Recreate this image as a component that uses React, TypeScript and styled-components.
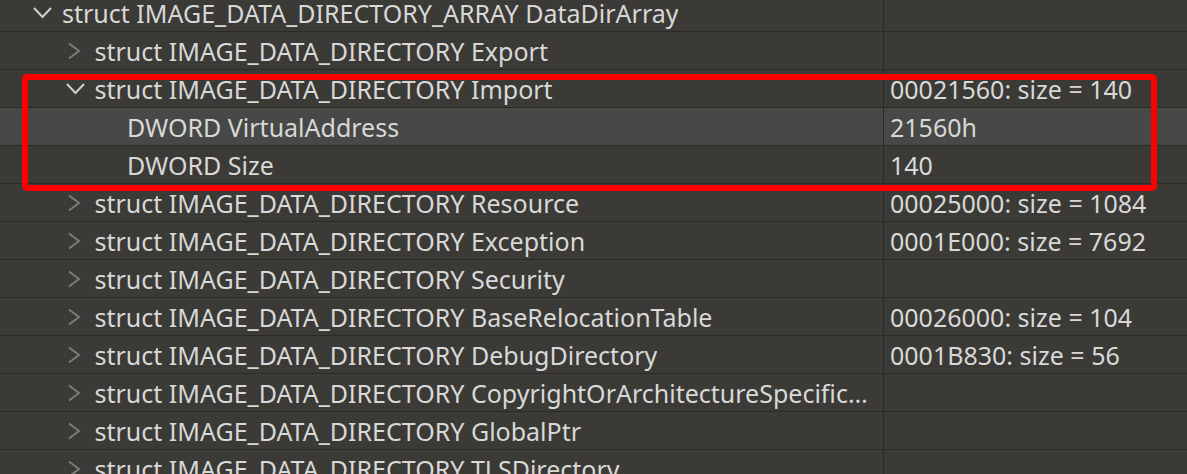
import React from 'react'
import styled, { createGlobalStyle } from 'styled-components'

const GlobalStyle = createGlobalStyle`
    html, body {
        margin: 0;
        padding: 0;
        background: #3b3a36;
        overflow: hidden;
    }
`

const Viewport = styled.div`
    position: relative;
    width: 1187px;
    height: 474px;
    overflow: hidden;
    background: #3b3a36;
    font-family: "Noto Sans", "Open Sans", sans-serif;
    font-size: 25px;
    color: #d8d8d8;
`

const Table = styled.div`
    margin-top: -6px;
    display: flex;
    flex-direction: column;
`

const Row = styled.div<{ $selected?: boolean }>`
    display: grid;
    grid-template-columns: 884px 1fr;
    height: 38px;
    box-sizing: border-box;
    border-bottom: 1px solid #2a2a27;
    background: ${p => (p.$selected ? '#484847' : 'transparent')};
`

const NameCell = styled.div<{ $level: number }>`
    display: flex;
    align-items: center;
    min-width: 0;
    padding-left: ${p => 30 + p.$level * 32.5}px;
    padding-right: 2px;
    border-right: 1px solid #2a2a27;
`

const Toggle = styled.span`
    flex: 0 0 24px;
    width: 24px;
    height: 24px;
    display: flex;
    align-items: center;
    justify-content: center;
    margin-right: 8px;
`

const Label = styled.span`
    white-space: nowrap;
    overflow: hidden;
    text-overflow: ellipsis;
`

const ValueCell = styled.div`
    display: flex;
    align-items: center;
    padding-left: 6px;
    white-space: nowrap;
    overflow: hidden;
`

const Highlight = styled.div`
    position: absolute;
    left: 22px;
    top: 74px;
    width: 1135px;
    height: 117px;
    box-sizing: border-box;
    border: 6px solid #ff0000;
    border-radius: 5px;
    pointer-events: none;
`

const Chevron = ({ open }: { open: boolean }) =>
    open ? (
        <svg width="24" height="24" viewBox="0 0 24 24">
            <polyline points="4,7 12.5,16 21,7" fill="none" stroke="#cfcfcf" strokeWidth="2" />
        </svg>
    ) : (
        <svg width="24" height="24" viewBox="0 0 24 24">
            <polyline points="6,4.5 16,12 6,19.5" fill="none" stroke="#7c7c7a" strokeWidth="2" />
        </svg>
    )

type Item = {
    level: number
    name: string
    value?: string
    open?: boolean
    leaf?: boolean
    selected?: boolean
}

const dir = 'struct IMAGE_DATA_DIRECTORY '

const rows: Item[] = [
    { level: 0, name: 'struct IMAGE_DATA_DIRECTORY_ARRAY DataDirArray', open: true },
    { level: 1, name: dir + 'Export' },
    { level: 1, name: dir + 'Import', value: '00021560: size = 140', open: true },
    { level: 2, name: 'DWORD VirtualAddress', value: '21560h', leaf: true, selected: true },
    { level: 2, name: 'DWORD Size', value: '140', leaf: true },
    { level: 1, name: dir + 'Resource', value: '00025000: size = 1084' },
    { level: 1, name: dir + 'Exception', value: '0001E000: size = 7692' },
    { level: 1, name: dir + 'Security' },
    { level: 1, name: dir + 'BaseRelocationTable', value: '00026000: size = 104' },
    { level: 1, name: dir + 'DebugDirectory', value: '0001B830: size = 56' },
    { level: 1, name: dir + 'CopyrightOrArchitectureSpecificData' },
    { level: 1, name: dir + 'GlobalPtr' },
    { level: 1, name: dir + 'TLSDirectory' },
]

const App = () => {
    return (
        <Viewport>
            <GlobalStyle />
            <Table>
                {rows.map((r, i) => (
                    <Row key={i} $selected={r.selected}>
                        <NameCell $level={r.level}>
                            <Toggle>{!r.leaf && <Chevron open={!!r.open} />}</Toggle>
                            <Label>{r.name}</Label>
                        </NameCell>
                        <ValueCell>{r.value}</ValueCell>
                    </Row>
                ))}
            </Table>
            <Highlight />
        </Viewport>
    )
}

export default App
